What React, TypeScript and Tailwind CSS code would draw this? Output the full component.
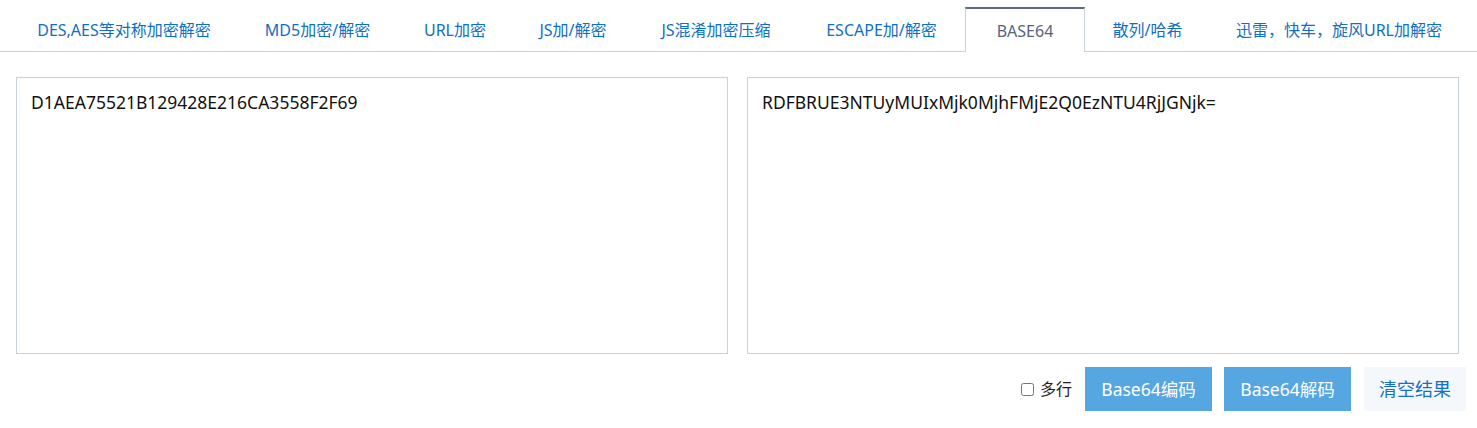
import { type FC } from 'react';

const tabs = [
    { label: 'DES,AES等对称加密解密', w: 'w-[226px]' },
    { label: 'MD5加密/解密', w: 'w-[161px]' },
    { label: 'URL加密', w: 'w-[114px]' },
    { label: 'JS加/解密', w: 'w-[122px]' },
    { label: 'JS混淆加密压缩', w: 'w-[164px]' },
    { label: 'ESCAPE加/解密', w: 'w-[167px]' },
    { label: 'BASE64', w: 'w-[120px]', active: true },
    { label: '散列/哈希', w: 'w-[125px]' },
    { label: '迅雷，快车，旋风URL加解密', w: 'w-[258px]' },
];

const font = "font-['Noto_Sans','Noto_Sans_CJK_SC',sans-serif]";

const App: FC = () => {
    return (
        <div className={`w-[1477px] h-[428px] bg-white ${font}`}>
            {/* tab strip */}
            <div className="flex h-[52px] border-b border-[#c9d1dd] pl-[11px]">
                {tabs.map((t) =>
                    t.active ? (
                        <div
                            key={t.label}
                            className={`${t.w} mt-[7px] h-[45px] -mb-px flex items-center justify-center bg-white border-t-2 border-t-[#5a6a87] border-x border-x-[#c9d1dd] text-[16px] text-[#56647e]`}
                        >
                            {t.label}
                        </div>
                    ) : (
                        <div
                            key={t.label}
                            className={`${t.w} mt-[7px] h-[45px] flex items-center justify-center text-[16px] text-[#0f6fc6] cursor-pointer`}
                        >
                            {t.label}
                        </div>
                    )
                )}
            </div>

            <div className="pl-[16px] pr-[11px] pt-[25px]">
                <div className="flex gap-[19px] pr-[7px]">
                    <textarea
                        readOnly
                        defaultValue="D1AEA75521B129428E216CA3558F2F69"
                        className="w-[712px] h-[277px] resize-none border border-[#c9d1dd] px-[14px] py-[12px] text-[17.5px] leading-[24px] text-[#111] outline-none"
                    />
                    <textarea
                        readOnly
                        defaultValue="RDFBRUE3NTUyMUIxMjk0MjhFMjE2Q0EzNTU4RjJGNjk="
                        className="w-[712px] h-[277px] resize-none border border-[#c9d1dd] px-[14px] py-[12px] text-[17.5px] leading-[24px] text-[#111] outline-none"
                    />
                </div>

                {/* actions */}
                <div className="flex justify-end items-center mt-[13px]">
                    <label className="flex items-center gap-[6px] text-[16px] text-[#222] mr-[13px]">
                        <input type="checkbox" className="w-[13px] h-[13px] m-0" />
                        多行
                    </label>
                    <button className="w-[127px] h-[44px] bg-[#56a7e1] text-white text-[17.5px]">Base64编码</button>
                    <button className="w-[127px] h-[44px] ml-[12px] bg-[#56a7e1] text-white text-[17.5px]">Base64解码</button>
                    <button className="w-[102px] h-[44px] ml-[13px] bg-[#f4f8fc] text-[#1570c6] text-[18px]">清空结果</button>
                </div>
            </div>
        </div>
    );
};

export default App;
